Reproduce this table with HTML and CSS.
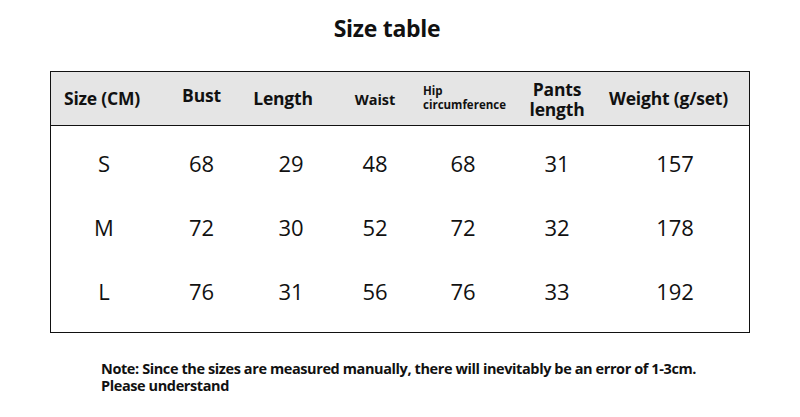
FILE: index.html
```html
<!DOCTYPE html>
<html>
<head>
<meta charset="utf-8">
<link rel="stylesheet" href="styles.css">
</head>
<body>
<div class="page">
  <h1 class="title">Size table</h1>
  <div class="table">
    <div class="row head">
      <div class="cell c1"><span class="h16">Size (CM)</span></div>
      <div class="cell c2"><span class="h16 up">Bust</span></div>
      <div class="cell c3"><span class="h16 shift-len">Length</span></div>
      <div class="cell c4"><span class="h13">Waist</span></div>
      <div class="cell c5 left"><span class="h11">Hip<br>circumference</span></div>
      <div class="cell c6"><span class="h16 two">Pants<br>length</span></div>
      <div class="cell c7"><span class="h16 shift-w">Weight (g/set)</span></div>
    </div>
    <div class="body">
      <div class="row data">
        <div class="cell c1">S</div><div class="cell c2">68</div><div class="cell c3">29</div><div class="cell c4">48</div><div class="cell c5">68</div><div class="cell c6">31</div><div class="cell c7">157</div>
      </div>
      <div class="row data">
        <div class="cell c1">M</div><div class="cell c2">72</div><div class="cell c3">30</div><div class="cell c4">52</div><div class="cell c5">72</div><div class="cell c6">32</div><div class="cell c7">178</div>
      </div>
      <div class="row data">
        <div class="cell c1">L</div><div class="cell c2">76</div><div class="cell c3">31</div><div class="cell c4">56</div><div class="cell c5">76</div><div class="cell c6">33</div><div class="cell c7">192</div>
      </div>
    </div>
  </div>
  <p class="note">Note: Since the sizes are measured manually, there will inevitably be an error of 1-3cm.<br>Please understand</p>
</div>
</body>
</html>
```
FILE: styles.css
```css
html, body {
  margin: 0;
  padding: 0;
  background: #ffffff;
}
.page {
  width: 800px;
  height: 417px;
  overflow: hidden;
  font-family: "Open Sans", "Noto Sans", sans-serif;
  color: #111;
}
.title {
  margin: 0;
  padding-top: 12px;
  padding-right: 26px;
  height: 71px;
  box-sizing: border-box;
  text-align: center;
  font-size: 23px;
  line-height: 32px;
  font-weight: 700;
  letter-spacing: -0.3px;
}
.table {
  margin-left: 50px;
  width: 700px;
  height: 262px;
  box-sizing: border-box;
  border: 1px solid #111;
}
.row {
  display: grid;
  grid-template-columns: 102px 97px 82px 86px 90px 98px 143px;
  align-items: center;
}
.head {
  height: 53px;
  background: #e5e5e5;
  border-bottom: 1px solid #111;
  font-weight: 700;
}
.cell {
  text-align: center;
}
.left {
  text-align: left;
  padding-left: 5px;
}
.h16 {
  font-size: 17.5px;
  line-height: 20px;
  letter-spacing: -0.2px;
  display: inline-block;
}
.up {
  position: relative;
  top: -3px;
}
.shift-len {
  position: relative;
  left: -8px;
}
.shift-w {
  position: relative;
  left: -9px;
}
.two {
  position: relative;
  top: 1px;
}
.h13 {
  font-size: 14.5px;
  display: inline-block;
}
.h11 {
  font-size: 11.5px;
  line-height: 14px;
  display: inline-block;
}
.body {
  padding-top: 5px;
}
.data {
  height: 64px;
  font-size: 22px;
}
.data .c1 {
  padding-left: 4px;
}
.data .c7 {
  padding-right: 5px;
}
.note {
  margin: 27px 0 0 101px;
  font-size: 14.5px;
  line-height: 17px;
  font-weight: 700;
  letter-spacing: -0.4px;
}
```
